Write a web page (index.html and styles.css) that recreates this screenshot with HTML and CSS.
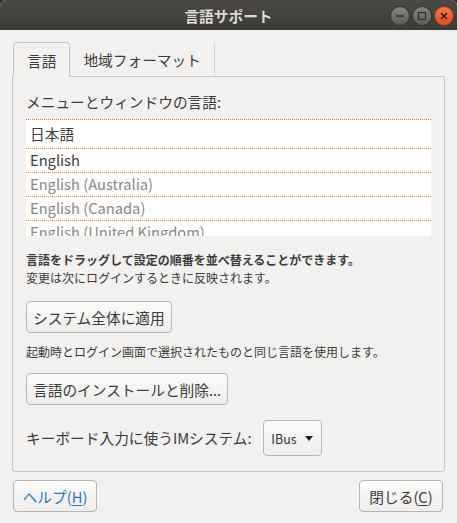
FILE: index.html
```html
<!DOCTYPE html>
<html lang="ja">
<head>
    <meta charset="UTF-8">
    <title>言語サポート</title>
    <link rel="stylesheet" href="styles.css">
</head>
<body>
    <div class="window">
        <div class="titlebar">
            <span class="title">言語サポート</span>
            <div class="win-buttons">
                <span class="win-btn">
                    <svg width="10" height="10" viewBox="0 0 10 10"><path d="M1 5h8" stroke="#2f2e2b" stroke-width="1.6"/></svg>
                </span>
                <span class="win-btn">
                    <svg width="10" height="10" viewBox="0 0 10 10"><rect x="1.5" y="1.5" width="7" height="7" fill="none" stroke="#2f2e2b" stroke-width="1.2"/></svg>
                </span>
                <span class="win-btn close">
                    <svg width="10" height="10" viewBox="0 0 10 10"><path d="M2 2l6 6M8 2l-6 6" stroke="#3a1a0e" stroke-width="1.5"/></svg>
                </span>
            </div>
        </div>

        <div class="content">
            <div class="tabs">
                <div class="tab active">言語</div>
                <div class="tab">地域フォーマット</div>
            </div>

            <div class="panel">
                <div class="label">メニューとウィンドウの言語:</div>

                <div class="lang-list">
                    <div class="lang-row first">日本語</div>
                    <div class="lang-row">English</div>
                    <div class="lang-row muted">English (Australia)</div>
                    <div class="lang-row muted">English (Canada)</div>
                    <div class="lang-row muted">English (United Kingdom)</div>
                </div>

                <p class="hint bold">言語をドラッグして設定の順番を並べ替えることができます。</p>
                <p class="hint">変更は次にログインするときに反映されます。</p>

                <div class="btn-row first-btn">
                    <button class="btn">システム全体に適用</button>
                </div>

                <p class="hint spaced">起動時とログイン画面で選択されたものと同じ言語を使用します。</p>

                <div class="btn-row second-btn">
                    <button class="btn">言語のインストールと削除...</button>
                </div>

                <div class="im-row">
                    <span class="label">キーボード入力に使うIMシステム:</span>
                    <button class="combo">IBus <span class="arrow"></span></button>
                </div>
            </div>

            <div class="footer">
                <button class="btn footer-btn help">ヘルプ(<u>H</u>)</button>
                <button class="btn footer-btn">閉じる(<u>C</u>)</button>
            </div>
        </div>
    </div>
</body>
</html>
```

FILE: styles.css
```css
:root {
    --bg: #f2f1f0;
    --text: #3c3c3c;
    --border: #c9c6c2;
    --orange: #f07a3c;
}

body {
    margin: 0;
    font-family: "Noto Sans CJK JP", "Noto Sans", sans-serif;
    color: var(--text);
    background-color: #2f2e2a;
}

.window {
    width: 457px;
    height: 523px;
    background-color: var(--bg);
    border-radius: 6px 6px 0 0;
    overflow: hidden;
}

.titlebar {
    height: 30px;
    background: linear-gradient(#4a4944, #3c3b37);
    display: flex;
    justify-content: center;
    align-items: center;
    position: relative;
}

.title {
    color: #dfdbd2;
    font-weight: bold;
    font-size: 14.7px;
}

.win-buttons {
    position: absolute;
    right: 3px;
    top: 6px;
    display: flex;
    gap: 2px;
}

.win-btn {
    width: 18px;
    height: 18px;
    border-radius: 50%;
    background: linear-gradient(#85837e, #5d5c57);
    border: 1px solid #35342f;
    display: flex;
    justify-content: center;
    align-items: center;
}

.win-btn.close {
    background: linear-gradient(#f57a4c, #df4a1c);
    border-color: #8c3415;
}

.content {
    padding: 12px 12px 14px;
}

.tabs {
    display: flex;
    height: 34px;
    padding-left: 1px;
}

.tab {
    font-size: 14.7px;
    padding: 0 13px;
    display: flex;
    align-items: center;
    border-right: 1px solid #d8d5d1;
    margin-top: 1px;
}

.tab.active {
    border: 1px solid var(--border);
    border-bottom: none;
    border-radius: 4px 4px 0 0;
    background-color: var(--bg);
    margin-top: 0;
    margin-bottom: -1px;
    position: relative;
    z-index: 1;
}

.panel {
    border: 1px solid var(--border);
    border-radius: 0 0 3px 3px;
    padding: 15px 13px 13px;
    height: 366px;
}

.label {
    font-size: 14.7px;
    line-height: 20px;
}

.lang-list {
    margin-top: 7px;
    height: 117px;
    overflow: hidden;
    background-color: #fff;
}

.lang-row {
    height: 23px;
    line-height: 22px;
    padding-left: 4px;
    font-size: 14.7px;
    border-top: 1px dotted var(--orange);
}

.lang-row.first {
    height: 28px;
    line-height: 28px;
    border-bottom: 1px dotted var(--orange);
}

.lang-row.first + .lang-row {
    border-top: none;
}

.lang-row.muted {
    color: #8a8886;
}

.hint {
    margin: 0;
    font-size: 12px;
    line-height: 18px;
}

.hint.bold {
    font-weight: bold;
    margin-top: 15px;
}

.hint.spaced {
    margin-top: 10px;
}

.btn-row.first-btn {
    margin-top: 14px;
}

.btn-row.second-btn {
    margin-top: 12px;
}

.btn {
    font-family: inherit;
    font-size: 14.7px;
    color: var(--text);
    height: 32px;
    padding: 0 6px;
    border: 1px solid #bab7b3;
    border-radius: 4px;
    background: linear-gradient(#fbfbfa, #eeedec);
    box-shadow: 0 1px 0 rgba(255,255,255,0.6) inset;
}

.im-row {
    margin-top: 15px;
    display: flex;
    align-items: center;
    gap: 11px;
}

.combo {
    font-family: inherit;
    font-size: 12.5px;
    color: #333;
    height: 36px;
    width: 59px;
    border: 1px solid #bab7b3;
    border-radius: 4px;
    background: linear-gradient(#fbfbfa, #eeedec);
    display: flex;
    align-items: center;
    justify-content: center;
    gap: 8px;
    padding: 0;
}

.arrow {
    width: 0;
    height: 0;
    border-left: 4.5px solid transparent;
    border-right: 4.5px solid transparent;
    border-top: 5px solid #222;
}

.footer {
    margin-top: 8px;
    display: flex;
    justify-content: space-between;
    padding: 0 2px 0 1px;
}

.footer-btn {
    width: 84px;
    padding: 0;
}

.footer-btn.help {
    color: #2a7ac0;
}

.footer-btn u {
    text-underline-offset: 2px;
}
```
